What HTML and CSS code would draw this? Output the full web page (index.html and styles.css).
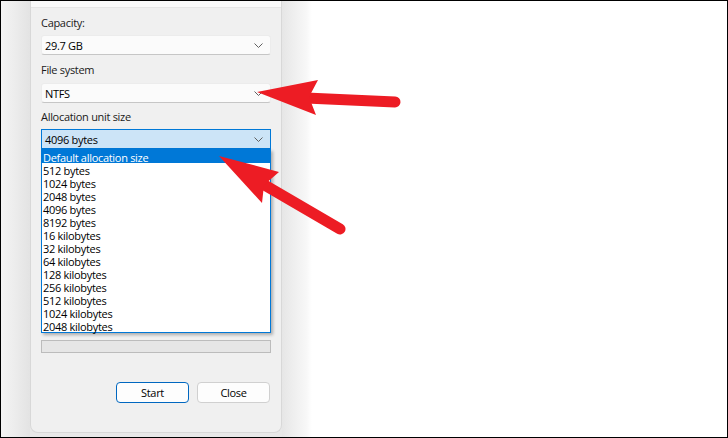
FILE: index.html
```html
<!DOCTYPE html>
<html>
<head>
<meta charset="utf-8">
<link rel="stylesheet" href="styles.css">
</head>
<body>
<div class="screen">
  <div class="gutter"></div>
  <div class="dialog-col">
    <div class="dialog">
      <div class="topstrip"></div>
      <div class="content">
        <div class="label first">Capacity:</div>
        <div class="combo"><span>29.7 GB</span><svg class="chev" width="9" height="5" viewBox="0 0 9 5"><path d="M0.5 0.5 L4.5 4.5 L8.5 0.5" fill="none" stroke="#606060" stroke-width="1"/></svg></div>
        <div class="label">File system</div>
        <div class="combo c2"><span>NTFS</span><svg class="chev" width="9" height="5" viewBox="0 0 9 5"><path d="M0.5 0.5 L4.5 4.5 L8.5 0.5" fill="none" stroke="#606060" stroke-width="1"/></svg></div>
        <div class="label l3">Allocation unit size</div>
        <div class="combo-wrap">
          <div class="combo open"><span>4096 bytes</span><svg class="chev" width="9" height="5" viewBox="0 0 9 5"><path d="M0.5 0.5 L4.5 4.5 L8.5 0.5" fill="none" stroke="#606060" stroke-width="1"/></svg></div>
          <ul class="list">
            <li class="sel">Default allocation size</li>
            <li>512 bytes</li>
            <li>1024 bytes</li>
            <li>2048 bytes</li>
            <li>4096 bytes</li>
            <li>8192 bytes</li>
            <li>16 kilobytes</li>
            <li>32 kilobytes</li>
            <li>64 kilobytes</li>
            <li>128 kilobytes</li>
            <li>256 kilobytes</li>
            <li>512 kilobytes</li>
            <li>1024 kilobytes</li>
            <li>2048 kilobytes</li>
          </ul>
        </div>
        <div class="progress"></div>
        <div class="buttons">
          <button class="btn primary">Start</button>
          <button class="btn">Close</button>
        </div>
      </div>
    </div>
  </div>
  <div class="shadow"></div>
  <div class="desk"></div>
  <svg class="arrows" width="728" height="438" viewBox="0 0 728 438">
    <line x1="306" y1="98" x2="395" y2="102" stroke="#ed1c24" stroke-width="11" stroke-linecap="round"/>
    <polygon points="257,92 318,80 309,97 316,115" fill="#ed1c24"/>
    <line x1="256" y1="180" x2="340" y2="229" stroke="#ed1c24" stroke-width="11" stroke-linecap="round"/>
    <polygon points="219,156 279,172 264,185 262,203" fill="#ed1c24"/>
  </svg>
</div>
</body>
</html>
```

FILE: styles.css
```css
* { box-sizing: border-box; }
html, body { margin: 0; padding: 0; }
body {
  width: 728px;
  height: 438px;
  overflow: hidden;
  font-family: "Open Sans", "Noto Sans", sans-serif;
  font-size: 11px;
  letter-spacing: -0.3px;
  color: #000;
}
.screen {
  position: relative;
  width: 728px;
  height: 438px;
  border: 1px solid #000;
  display: flex;
  background: #fff;
}
.gutter {
  width: 29px;
  background: linear-gradient(to right, #f4f4f4, #ececec 50%, #e3e3e3);
}
.dialog-col {
  width: 252px;
  background: #e8e8e8;
  padding-bottom: 4px;
  display: flex;
}
.dialog {
  flex: 1;
  background: #f0f0f0;
  border: 1px solid #d8d8d8;
  border-top: none;
  border-radius: 0 0 8px 8px;
  display: flex;
  flex-direction: column;
}
.topstrip {
  height: 7px;
  background: #fafafa;
  border-bottom: 1px solid #e6e6e6;
}
.content {
  padding: 8px 10px 0 10px;
  display: flex;
  flex-direction: column;
}
.label {
  height: 14px;
  line-height: 14px;
  margin-top: 8px;
  color: #1a1a1a;
}
.label.first { margin-top: 0; }
.label.l3 { margin-top: 7px; }
.combo {
  height: 20px;
  margin-top: 5px;
  background: #fbfbfb;
  border: 1px solid #ececec;
  border-bottom-color: #c6c6c6;
  border-radius: 3px;
  display: flex;
  align-items: center;
  justify-content: space-between;
  padding: 1px 7px 0 3px;
  line-height: 18px;
}
.combo.c2 { margin-top: 6px; }
.combo-wrap {
  position: relative;
  margin-top: 5px;
}
.combo.open {
  margin-top: 0;
  background: #cce4f7;
  border: 1px solid #0078d7;
  border-radius: 0;
}
.chev { display: block; }
.list {
  position: absolute;
  left: 0;
  right: 0;
  top: 20px;
  margin: 0;
  padding: 0;
  list-style: none;
  background: #fff;
  border: 1px solid #0078d7;
  box-shadow: 2px 2px 3px rgba(0, 0, 0, 0.28);
  z-index: 2;
}
.list li {
  height: 13px;
  line-height: 13px;
  padding-left: 1px;
  padding-top: 1px;
  white-space: nowrap;
}
.list li.sel {
  background: #0078d7;
  color: #fff;
}
.progress {
  margin-top: 191px;
  height: 13px;
  background: #e6e6e6;
  border: 1px solid #bcbcbc;
}
.buttons {
  margin-top: 29px;
  display: flex;
  justify-content: flex-end;
  gap: 8px;
  padding-right: 1px;
}
.btn {
  width: 73px;
  height: 21px;
  padding: 0;
  font-family: inherit;
  font-size: 11px;
  letter-spacing: -0.3px;
  color: #000;
  background: #fdfdfd;
  border: 1px solid #d0d0d0;
  border-radius: 4px;
}
.btn.primary {
  border-color: #0067c0;
}
.shadow {
  width: 30px;
  background: linear-gradient(to right, #e6e6e6, #efefef 40%, #f7f7f7 80%, #fff);
}
.desk {
  flex: 1;
  background: #fff;
}
.arrows {
  position: absolute;
  left: -1px;
  top: -1px;
  pointer-events: none;
  z-index: 5;
}
```
